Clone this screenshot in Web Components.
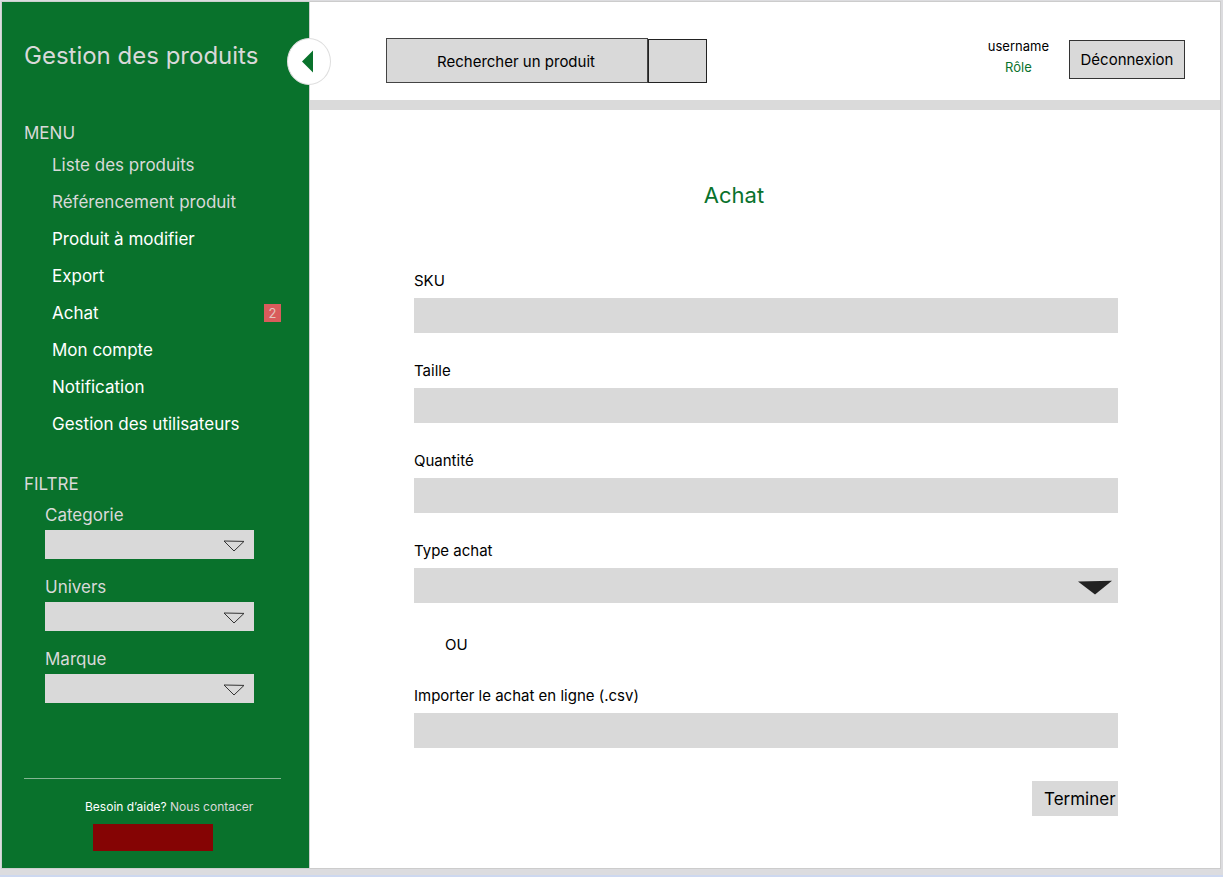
<!DOCTYPE html>
<html lang="fr">
<head>
<meta charset="utf-8">
<title>Gestion des produits</title>
<style>
body { margin: 0; background: #fff; font-family: Inter, "Liberation Sans", sans-serif; color: #000;
  --green: #09722c; --grey: #d9d9d9; --light: #d9d9d9; }
</style>
</head>
<body>
<app-shell>
  <side-bar slot="side">
    <nav-item slot="menu" muted>Liste des produits</nav-item>
    <nav-item slot="menu" muted>Référencement produit</nav-item>
    <nav-item slot="menu">Produit à modifier</nav-item>
    <nav-item slot="menu">Export</nav-item>
    <nav-item slot="menu" count="2">Achat</nav-item>
    <nav-item slot="menu">Mon compte</nav-item>
    <nav-item slot="menu">Notification</nav-item>
    <nav-item slot="menu">Gestion des utilisateurs</nav-item>
    <filter-select slot="filter" label="Categorie"></filter-select>
    <filter-select slot="filter" label="Univers"></filter-select>
    <filter-select slot="filter" label="Marque"></filter-select>
  </side-bar>
  <top-bar slot="top"><span slot="name">username</span><span slot="role">Rôle</span></top-bar>
  <purchase-form>
    <form-field label="SKU"></form-field>
    <form-field label="Taille"></form-field>
    <form-field label="Quantité"></form-field>
    <form-field label="Type achat" kind="select"></form-field>
    <or-divider>OU</or-divider>
    <form-field label="Importer le achat en ligne (.csv)"></form-field>
  </purchase-form>
</app-shell>

<script>
class Base extends HTMLElement {
  connectedCallback() {
    if (this.shadowRoot) return;
    this.attachShadow({ mode: "open" }).innerHTML =
      "<style>*{box-sizing:border-box}:host{box-sizing:border-box}button,input,select{font:inherit;color:inherit;margin:0;border-radius:0;appearance:none}" +
      this.css() + "</style>" + this.html();
  }
}

customElements.define("app-shell", class extends Base {
  css() { return `
    :host { display: grid; grid-template-columns: 307px minmax(0, 1fr); min-height: calc(100vh - 7px);
      margin-right: 3px; padding: 2px 3px 7px 2px; background: #dcdcdf; border-bottom: 2px solid #cdd8f0; }
    .side { display: grid; box-shadow: 0 0 0 1px #ccd0ce; z-index: 1; }
    .main { background: #fff; box-shadow: 0 0 0 1px #ccc; }`; }
  html() { return `<div class="side"><slot name="side"></slot></div>
    <div class="main"><slot name="top"></slot><main><slot></slot></main></div>`; }
});

customElements.define("side-bar", class extends Base {
  css() { return `
    :host { display: flex; flex-direction: column; position: relative; padding: 36px 28px 17px 22px;
      background: var(--green); color: var(--light); }
    h1 { margin: 0; font-size: 24px; line-height: 36px; font-weight: 400; }
    h2 { margin: 0; font-size: 17px; line-height: 26px; font-weight: 400; }
    nav { margin-top: 46px; }
    .items { display: grid; grid-auto-rows: 37px; padding-left: 28px; }
    section { margin-top: 29px; }
    .filters { display: grid; gap: 16px; padding: 6px 0 0 21px; }
    footer { display: flex; flex-direction: column; margin-top: auto; border-top: 1px solid #84b593;
      padding-top: 18px; font-size: 12px; line-height: 20px; }
    p { margin: 0 0 7px; padding-left: 61px; color: #fff; white-space: nowrap; }
    a { color: var(--light); text-decoration: none; }
    .cta { width: 120px; height: 27px; margin-left: 69px; padding: 0; border: 0; background: #850404; }
    .toggle { position: absolute; top: 36px; right: -22px; width: 44px; height: 47px; padding: 0;
      border: 1px solid #dedede; border-radius: 50%; background: #fff; }
    .toggle svg { display: block; width: 42px; height: 45px; }`; }
  html() { return `
    <h1>Gestion des produits</h1>
    <nav aria-labelledby="m"><h2 id="m">MENU</h2><div class="items"><slot name="menu"></slot></div></nav>
    <section aria-labelledby="f"><h2 id="f">FILTRE</h2><div class="filters"><slot name="filter"></slot></div></section>
    <footer><p>Besoin d’aide? <a href="#contact">Nous contacer</a></p><button class="cta" type="button" aria-label="Aide"></button></footer>
    <button class="toggle" type="button" aria-label="Réduire le menu"><svg viewBox="0 0 42 45"><path d="M14 22.5 25 11.5V33.5Z" fill="#09722c"/></svg></button>`; }
});

customElements.define("nav-item", class extends Base {
  css() { return `
    :host { display: flex; align-items: center; justify-content: space-between; color: #fff; font-size: 17px; line-height: 24px; }
    :host([muted]) { color: var(--light); }
    a { color: inherit; text-decoration: none; white-space: nowrap; }
    .badge { width: 17px; height: 18px; background: #d95c5c; color: #e4c5c0; font-size: 13px; line-height: 18px; text-align: center; }`; }
  html() {
    const n = this.getAttribute("count");
    return `<a href="#"><slot></slot></a>` + (n ? `<span class="badge">${n}</span>` : "");
  }
});

customElements.define("filter-select", class extends Base {
  css() { return `
    :host { display: block; width: 209px; font-size: 17px; line-height: 24px; }
    label { display: block; margin-bottom: 3px; }
    .box { position: relative; height: 29px; }
    select { width: 100%; height: 100%; border: 0; background: var(--grey); display: block; }
    svg { position: absolute; right: 9px; top: 10px; width: 22px; height: 12px; pointer-events: none; }`; }
  html() { return `<label for="s">${this.getAttribute("label")}</label>
    <div class="box"><select id="s"></select>
    <svg viewBox="0 0 22 12"><path d="M1 1 21 1.4 11 11Z" fill="none" stroke="#333" stroke-width="1"/></svg></div>`; }
});

customElements.define("top-bar", class extends Base {
  css() { return `
    :host { display: flex; align-items: flex-start; justify-content: space-between; padding: 36px 35px 17px 77px;
      border-bottom: 10px solid #dadada; }
    form { display: flex; height: 45px; }
    input { width: 262px; padding: 2px 0 0 12px; border: 1px solid #444; background: var(--grey); font-size: 15px; text-align: center; }
    input::placeholder { color: #000; opacity: 1; }
    .go { width: 59px; height: 44px; align-self: flex-end; padding: 0; border: 1px solid #222; background: var(--grey); }
    .user { display: flex; align-items: flex-start; gap: 20px; }
    .who { display: grid; margin-top: -2px; text-align: center; font-size: 13px; line-height: 21px; }
    .role { color: var(--green); }
    .out { width: 116px; height: 39px; margin-top: 2px; padding: 0; border: 1px solid #333; background: var(--grey); font-size: 15px; }`; }
  html() { return `<form role="search"><input type="search" aria-label="Rechercher un produit" placeholder="Rechercher un produit"><button class="go" type="button" aria-label="Rechercher"></button></form>
    <div class="user"><div class="who"><slot name="name"></slot><div class="role"><slot name="role"></slot></div></div>
    <button class="out" type="button">Déconnexion</button></div>`; }
});

customElements.define("purchase-form", class extends Base {
  css() { return `
    :host { display: block; padding: 69px 102px 52px 105px; }
    h2 { margin: 0 0 60px; padding-right: 64px; text-align: center; font-size: 22px; line-height: 32px; font-weight: 400; color: var(--green); }
    form { display: grid; gap: 28px; }
    button { justify-self: end; width: 86px; height: 35px; margin-top: 5px; padding: 0 3px 0 12px; border: 0; background: var(--grey); font-size: 17px; }`; }
  html() { return `<h2>Achat</h2><form><slot></slot><button type="button">Terminer</button></form>`; }
});

customElements.define("form-field", class extends Base {
  css() { return `
    :host { display: block; font-size: 15px; line-height: 20px; }
    label { display: block; margin-bottom: 7px; }
    .box { position: relative; height: 35px; }
    input, select { display: block; width: 100%; height: 100%; border: 0; padding: 0 12px; background: var(--grey); }
    svg { position: absolute; right: 5px; top: 12px; width: 36px; height: 15px; pointer-events: none; }`; }
  html() {
    const sel = this.getAttribute("kind") === "select";
    return `<label for="c">${this.getAttribute("label")}</label><div class="box">` +
      (sel ? `<select id="c"></select><svg viewBox="0 0 36 15"><path d="M1 1.5 35 .8 18 14.5Z" fill="#222"/></svg>`
           : `<input id="c" type="text">`) + `</div>`;
  }
});

customElements.define("or-divider", class extends Base {
  css() { return `:host { display: block; padding: 4px 0 3px 31px; font-size: 15px; line-height: 20px; }`; }
  html() { return `<slot></slot>`; }
});
</script>
</body>
</html>
